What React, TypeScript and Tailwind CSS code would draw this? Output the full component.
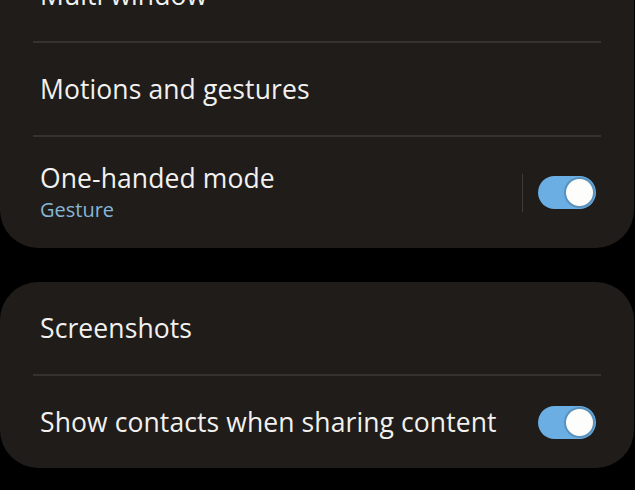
import React from 'react';

// One UI style settings list (dark)

function Toggle() {
  return (
    <div className="relative w-[58px] h-[33px] rounded-full bg-[#6aaee4]">
      <div className="absolute right-[3px] top-[3px] w-[27px] h-[27px] rounded-full bg-[#fdfdfb] ring-2 ring-[#4f7fa3]/60" />
    </div>
  );
}

function Divider() {
  return <div className="mx-[33px] h-[2px] bg-[#35322f]" />;
}

function Row({ title, sub, toggle, sep }: { title: string; sub?: string; toggle?: boolean; sep?: boolean }) {
  return (
    <div className={`flex items-center pl-[40px] pr-[38px] ${sub ? 'h-[111px]' : 'h-[92px]'}`}>
      <div className="flex-1 flex flex-col">
        <span className={`text-[26.5px] text-[#f2f1ef] tracking-[0.1px] ${sub ? 'leading-[30px]' : 'leading-[34px]'}`}>
          {title}
        </span>
        {sub && <span className="text-[20px] leading-[24px] mt-[5px] text-[#86b6d8]">{sub}</span>}
      </div>
      {sep && <div className="w-px h-[38px] bg-[#3f3b37] mr-[15px]" />}
      {toggle && <Toggle />}
    </div>
  );
}

export default function App() {
  return (
    <div
      className="w-[635px] h-[490px] overflow-hidden bg-black"
      style={{ fontFamily: '"Open Sans", "Noto Sans", sans-serif' }}
    >
      <div className="w-[634px] mt-[-51px] rounded-[38px] bg-[#1f1c19]">
        <Row title="Multi window" />
        <Divider />
        <Row title="Motions and gestures" />
        <Divider />
        <Row title="One-handed mode" sub="Gesture" toggle sep />
      </div>
      <div className="w-[634px] mt-[34px] rounded-[38px] bg-[#1f1c19]">
        <Row title="Screenshots" />
        <Divider />
        <Row title="Show contacts when sharing content" toggle />
      </div>
    </div>
  );
}
